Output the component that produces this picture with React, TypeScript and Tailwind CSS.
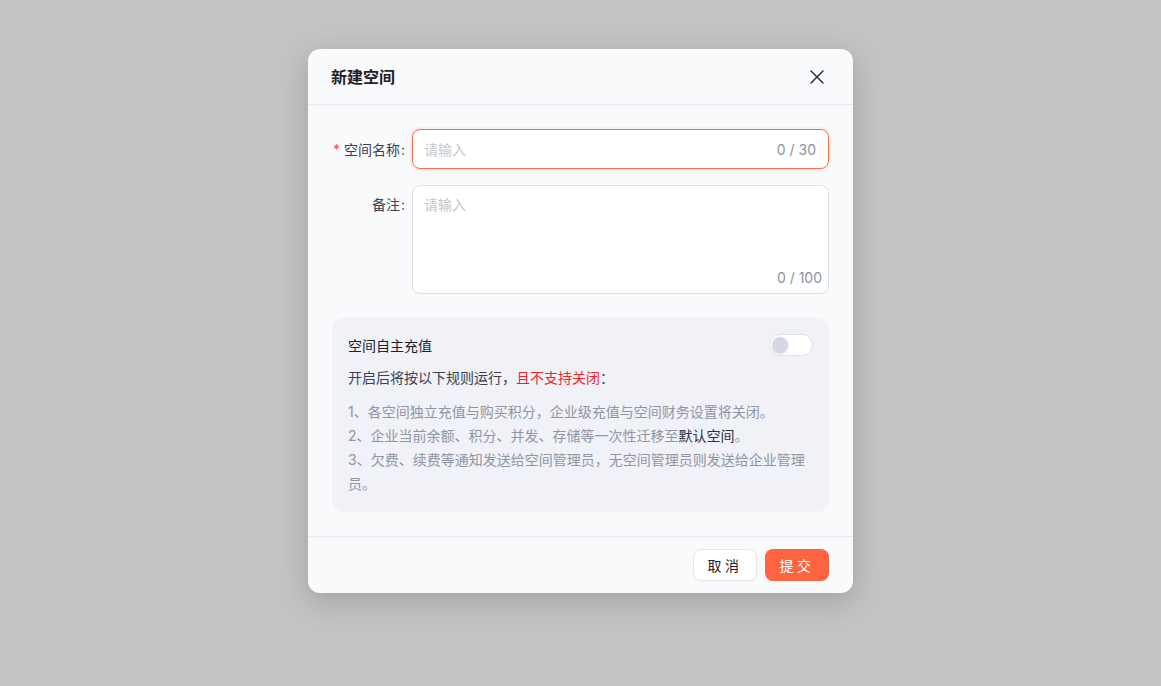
import React, { useState } from 'react';
import { X } from 'lucide-react';

export default function App() {
  const [name, setName] = useState('');
  const [note, setNote] = useState('');
  const [selfCharge, setSelfCharge] = useState(false);

  return (
    <div
      className="min-h-screen w-full bg-[#c3c3c3] pt-[49px]"
      style={{ fontFamily: 'Inter, "Noto Sans CJK SC", "Noto Sans", sans-serif' }}
    >
      <div className="mx-auto w-[545px] rounded-xl bg-[#f9fafc] shadow-[0_8px_28px_rgba(0,0,0,0.18)]">
        {/* HEADER */}
        <div className="flex h-[56px] items-center justify-between border-b border-[#e8eaf0] pl-[23px] pr-[24px]">
          <h2 className="text-[16px] font-semibold text-[#1d2129]">新建空间</h2>
          <button className="text-[#2b3040]">
            <X size={24} strokeWidth={1.5} />
          </button>
        </div>

        {/* BODY */}
        <div className="px-6 pt-6 pb-6">
          <div className="flex items-center">
            <label className="flex w-[80px] shrink-0 justify-end whitespace-nowrap pr-[7px] text-[14px] text-[#3b4152]">
              <span className="mr-[4px] text-[#f5553a]">*</span>空间名称<span className="ml-[1px]">:</span>
            </label>
            <div className="flex h-10 flex-1 items-center rounded-lg border border-[#ff6a47] bg-white pl-[11px] pr-3 shadow-[0_0_0_2px_rgba(255,106,71,0.08)]">
              <input
                value={name}
                onChange={e => setName(e.target.value.slice(0, 30))}
                placeholder="请输入"
                className="flex-1 bg-transparent text-[14px] text-[#1d2129] outline-none placeholder:text-[#c2c6cf]"
              />
              <span className="text-[14px] text-[#8c92a3]">{name.length} / 30</span>
            </div>
          </div>

          <div className="mt-4 flex items-start">
            <label className="flex w-[80px] shrink-0 justify-end whitespace-nowrap pt-[10px] pr-[7px] text-[14px] leading-5 text-[#3b4152]">
              备注<span className="ml-[1px]">:</span>
            </label>
            <div className="relative h-[109px] flex-1 rounded-lg border border-[#dcdfe8] bg-white">
              <textarea
                value={note}
                onChange={e => setNote(e.target.value.slice(0, 100))}
                placeholder="请输入"
                className="h-full w-full resize-none bg-transparent pl-[11px] pr-3 pt-[9px] text-[14px] leading-5 text-[#1d2129] outline-none placeholder:text-[#c2c6cf]"
              />
              <span className="absolute right-[6px] bottom-[5px] text-[14px] text-[#8c92a3]">{note.length} / 100</span>
            </div>
          </div>

          {/* INFO BOX */}
          <div className="mt-6 rounded-xl bg-[#f0f2f7] px-4 pt-4 pb-4">
            <div className="flex h-[22px] items-center justify-between">
              <span className="text-[14px] text-[#1d2129]">空间自主充值</span>
              <button
                onClick={() => setSelfCharge(!selfCharge)}
                className={`flex h-[22px] w-[44px] items-center rounded-full border px-[2px] ${selfCharge ? 'justify-end border-[#ff6340] bg-[#ff6340]' : 'justify-start border-[#dde1ea] bg-white'}`}
              >
                <span className={`h-4 w-4 rounded-full shadow-[0_1px_2px_rgba(0,0,0,0.15)] ${selfCharge ? 'bg-white' : 'bg-[#d3d8e6]'}`} />
              </button>
            </div>
            <p className="mt-3 text-[14px] leading-5 text-[#3b4152]">
              开启后将按以下规则运行，<span className="text-[#f5222d]">且不支持关闭</span>：
            </p>
            <div className="mt-3 text-[14px] leading-6 text-[#8f95a5]">
              <p>1、各空间独立充值与购买积分，企业级充值与空间财务设置将关闭。</p>
              <p>2、企业当前余额、积分、并发、存储等一次性迁移至<span className="text-[#2b3040]">默认空间</span>。</p>
              <p>3、欠费、续费等通知发送给空间管理员，无空间管理员则发送给企业管理员。</p>
            </div>
          </div>
        </div>

        {/* FOOTER */}
        <div className="flex justify-end gap-2 border-t border-[#e8eaf0] px-6 py-3">
          <button className="h-8 w-16 rounded-lg border border-[#e3e6ec] bg-white text-[14px] tracking-[0.25em] text-[#1d2129] shadow-[0_1px_2px_rgba(0,0,0,0.04)]">
            取消
          </button>
          <button className="h-8 w-16 rounded-lg bg-[#ff6340] text-[14px] tracking-[0.25em] text-white">
            提交
          </button>
        </div>
      </div>
    </div>
  );
}
